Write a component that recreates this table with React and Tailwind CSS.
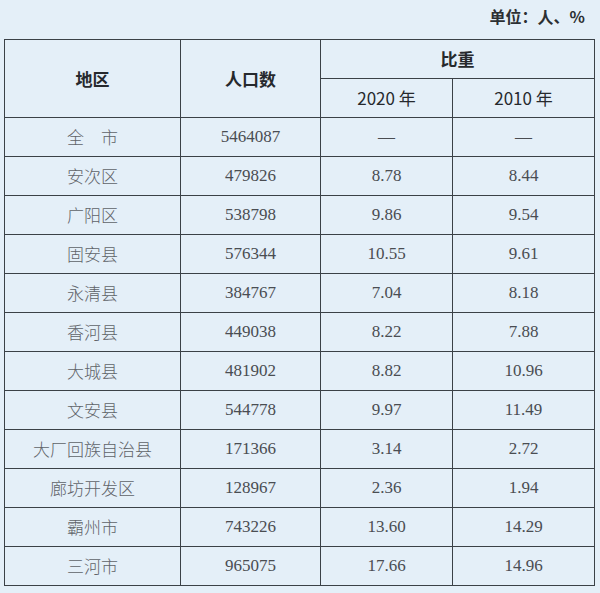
import React from "react";

const rows = [
  ["全\u3000市", "5464087", "—", "—"],
  ["安次区", "479826", "8.78", "8.44"],
  ["广阳区", "538798", "9.86", "9.54"],
  ["固安县", "576344", "10.55", "9.61"],
  ["永清县", "384767", "7.04", "8.18"],
  ["香河县", "449038", "8.22", "7.88"],
  ["大城县", "481902", "8.82", "10.96"],
  ["文安县", "544778", "9.97", "11.49"],
  ["大厂回族自治县", "171366", "3.14", "2.72"],
  ["廊坊开发区", "128967", "2.36", "1.94"],
  ["霸州市", "743226", "13.60", "14.29"],
  ["三河市", "965075", "17.66", "14.96"],
];

const sans = { fontFamily: '"Noto Sans CJK SC", "Liberation Sans", sans-serif' };
const serif = { fontFamily: '"Liberation Serif", "Noto Sans CJK SC", serif' };

export default function App() {
  return (
    <div className="w-[600px] h-[593px] bg-[#e4eff8] overflow-hidden">
      <div className="h-[39px] flex items-center justify-end pr-[15px] pb-[7px]">
        <span className="text-[16px] font-bold text-[#2c2f33]" style={sans}>
          单位：人、%
        </span>
      </div>
      <table className="ml-[4px] w-[590px] table-fixed border-collapse text-center">
        <colgroup>
          <col className="w-[176px]" />
          <col className="w-[140px]" />
          <col className="w-[132px]" />
          <col className="w-[142px]" />
        </colgroup>
        <thead style={sans} className="text-[17px] font-bold text-[#26292d]">
          <tr className="h-[39px]">
            <th rowSpan={2} className="border-[1.5px] border-[#3b4147] font-bold">地区</th>
            <th rowSpan={2} className="border-[1.5px] border-[#3b4147] font-bold">人口数</th>
            <th colSpan={2} className="border-[1.5px] border-[#3b4147] font-bold">比重</th>
          </tr>
          <tr className="h-[39px]">
            <th className="border-[1.5px] border-[#3b4147] font-normal text-[17px]">2020 年</th>
            <th className="border-[1.5px] border-[#3b4147] font-normal text-[17px]">2010 年</th>
          </tr>
        </thead>
        <tbody className="text-[17px] text-[#4a4d52]">
          {rows.map((r) => (
            <tr key={r[0]} className="h-[39px]">
              <td className="border-[1.5px] border-[#3b4147] text-[#5f6368]" style={sans}>
                <span className="font-light">{r[0]}</span>
              </td>
              <td className="border-[1.5px] border-[#3b4147]" style={serif}>{r[1]}</td>
              <td className="border-[1.5px] border-[#3b4147]" style={serif}>{r[2]}</td>
              <td className="border-[1.5px] border-[#3b4147]" style={serif}>{r[3]}</td>
            </tr>
          ))}
        </tbody>
      </table>
    </div>
  );
}
